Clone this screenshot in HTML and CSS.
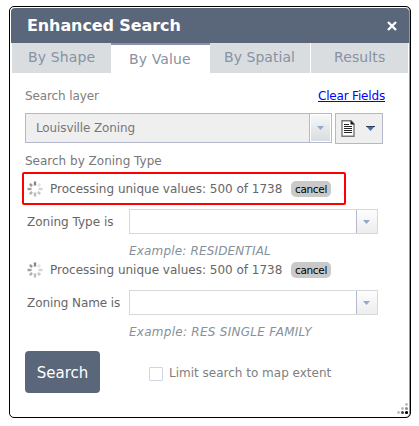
FILE: index.html
```html
<!DOCTYPE html>
<html lang="en">
<head>
<meta charset="utf-8">
<title>Enhanced Search</title>
<link rel="stylesheet" href="styles.css">
</head>
<body>
<svg width="0" height="0" class="defs">
  <symbol id="spinner" viewBox="0 0 16 16">
    <g stroke-width="2.4">
      <path d="M8 0.5v4" stroke="#858585"/>
      <path d="M13.2 2.8L10.9 5.1" stroke="#e3e3e3"/>
      <path d="M15.5 8h-4" stroke="#d3d3d3"/>
      <path d="M13.2 13.2l-2.3-2.3" stroke="#c6c6c6"/>
      <path d="M8 15.5v-4" stroke="#bbb"/>
      <path d="M2.8 13.2l2.3-2.3" stroke="#b0b0b0"/>
      <path d="M0.5 8h4" stroke="#a0a0a0"/>
      <path d="M2.8 2.8l2.3 2.3" stroke="#999"/>
    </g>
  </symbol>
  <symbol id="arrow" viewBox="0 0 7 4"><path d="M0 0h7L3.5 4z" fill="#8fa9cf"/></symbol>
</svg>
<main class="dialog">
  <header class="title"><h1>Enhanced Search</h1>
    <svg class="close" viewBox="0 0 10 10"><path d="M1 1l8 8M9 1L1 9" stroke="#fff" stroke-width="2.3"/></svg>
  </header>
  <nav class="tabs">
    <div class="tab shape"><span>By Shape</span></div>
    <div class="tab active"><span>By Value</span></div>
    <div class="tab spatial"><span>By Spatial</span></div>
    <div class="tab results"><span>Results</span></div>
  </nav>
  <div class="row layer"><span class="t-layer">Search layer</span><a href="#" class="t-clear">Clear Fields</a></div>
  <div class="row selects">
    <div class="select"><span class="t-lou">Louisville Zoning</span><i class="drop"><svg class="arrow"><use href="#arrow"/></svg></i></div>
    <div class="menu">
      <svg class="doc" viewBox="0 0 14 17"><path d="M1 .8h9l3 3v12.4H1z" fill="#fff" stroke="#777" stroke-width="1.4"/><path d="M9.5.5l4 4h-4z" fill="#111"/><path d="M3 4.5h5M3 6.5h8M3 8.5h8M3 10.5h8M3 12.5h8" stroke="#222" stroke-width="1.1"/></svg>
      <svg class="arrow2" viewBox="0 0 9 5"><path d="M0 0h9L4.5 5z" fill="#4b7096"/><path d="M0 .5h9" stroke="#27415c"/></svg>
    </div>
  </div>
  <div class="row by"><span class="t-by">Search by Zoning Type</span></div>
  <div class="status marked"><svg class="spin"><use href="#spinner"/></svg><span class="t-proc">Processing unique values: 500 of 1738</span><button class="cancel">cancel</button></div>
  <div class="field first"><label class="t-type">Zoning Type is</label><div class="combo"><i class="drop"><svg class="arrow"><use href="#arrow"/></svg></i></div></div>
  <div class="hint"><span class="t-ex1">Example: RESIDENTIAL</span></div>
  <div class="status"><svg class="spin"><use href="#spinner"/></svg><span class="t-proc">Processing unique values: 500 of 1738</span><button class="cancel">cancel</button></div>
  <div class="field second"><label class="t-name">Zoning Name is</label><div class="combo"><i class="drop"><svg class="arrow"><use href="#arrow"/></svg></i></div></div>
  <div class="hint"><span class="t-ex2">Example: RES SINGLE FAMILY</span></div>
  <footer class="foot"><button class="search">Search</button><i class="check"></i><span class="t-limit">Limit search to map extent</span></footer>
  <svg class="grip" viewBox="0 0 11 11"><g fill="#bbb"><circle cx="9.5" cy="1.5" r="1.4"/><circle cx="5.5" cy="5.5" r="1.4"/><circle cx="1.5" cy="9.5" r="1.4"/></g><circle cx="9.5" cy="5.5" r="1.5" fill="#888"/><circle cx="5.5" cy="9.5" r="1.5" fill="#444"/><circle cx="9.5" cy="9.5" r="1.6"/></svg>
</main>
</body>
</html>
```

FILE: styles.css
```css
* { box-sizing: border-box; }
body { margin: 0; background: #fff; font: 12px/16px "DejaVu Sans", sans-serif; color: #666; }
span, label, a, h1 { white-space: nowrap; }
.defs { position: absolute; }
.dialog { position: relative; width: 402px; height: 412px; margin: 6px 0 0 9px; border: 1px solid #000; border-radius: 5px; box-shadow: inset -1px 0 #999; padding: 1px 1px 0; }
.title { height: 35px; background: #5a6679; border-radius: 4px 4px 0 0; display: flex; align-items: center; justify-content: space-between; padding: 1px 12px 0 16px; }
h1 { margin: 0; font-size: 16px; line-height: 20px; color: #fff; letter-spacing: -.1px; }
.close { width: 10px; height: 10px; }
.tabs { display: grid; grid-template-columns: 99px 99px 100px 98px; height: 30px; padding-left: 1px; font-size: 14px; line-height: 18px; color: #8792a2; letter-spacing: .12px; }
.tab { background: #d9dde0; padding-top: 5px; padding-left: 16px; }
.tab.active { background: #fff; border-top: 2px solid #8a93a8; padding-left: 18px; }
.spatial { padding-left: 14px; letter-spacing: .05px; }
.results { margin-left: 1px; padding-left: 23px; }
.row { display: flex; margin-left: 14px; }
.layer { height: 40px; width: 360px; padding-top: 15px; justify-content: space-between; color: #808080; }
.t-layer { letter-spacing: -.1px; }
.t-clear { color: #00f; letter-spacing: -.18px; }
.t-lou { letter-spacing: -.12px; }
.selects { height: 31px; gap: 3px; }
.select { width: 307px; height: 30px; border: 1px solid #b3b9cb; background: #efefef; display: flex; align-items: center; justify-content: space-between; padding-left: 10px; color: #777; }
.drop { width: 21px; height: 100%; border-left: 1px solid #b3b9cb; background: linear-gradient(#fdfdfd, #ededed); display: flex; align-items: center; padding-left: 6px; }
.select .drop { background: linear-gradient(#f5f7f9, #d9dde0); border: 1px solid #fff; box-shadow: -1px 0 #b3b9cb; }
.arrow { width: 7px; height: 4px; }
.menu { width: 48px; height: 31px; border: 1px solid #b3b9cb; background: #efefef; display: flex; align-items: center; padding-left: 5px; gap: 11px; }
.doc { width: 14px; height: 17px; }
.arrow2 { width: 9px; height: 5px; }
.by { height: 28px; padding-top: 9px; color: #777; }
.status { width: 324px; height: 33px; margin-left: 11px; padding-left: 5px; display: flex; align-items: center; }
.marked { border: 2px solid #f00; border-radius: 2px; padding-left: 3px; }
.spin { width: 16px; height: 16px; margin-right: 7px; }
.t-proc { width: 241px; }
.cancel { width: 40px; height: 16px; margin: 0; padding: 1px 0 0; border: 0; border-radius: 5px; background: #c9c9c9; color: #000; font: 10.5px/15px "DejaVu Sans", sans-serif; letter-spacing: -.35px; }
.field { display: flex; align-items: center; height: 25px; margin-left: 16px; }
.field label { width: 102px; }
.t-name { letter-spacing: -.08px; }
.first, .second { margin-top: 4px; }
.combo { width: 249px; height: 25px; border: 1px solid #d5d8dd; display: flex; justify-content: flex-end; }
.hint { height: 19px; padding: 9px 0 0 118px; font-style: italic; color: #85919b; }
.t-ex1 { letter-spacing: .17px; }
.t-ex2 { letter-spacing: .27px; }
.second + .hint { height: 36px; }
.foot { display: flex; align-items: center; margin-left: 14px; height: 42px; }
.search { width: 75px; height: 42px; padding: 1px 0 0; border: 0; border-radius: 4px; background: #5a6679; color: #fff; font: 15px "DejaVu Sans", sans-serif; }
.check { width: 14px; height: 14px; border: 1px solid #cfd6df; border-radius: 1px; margin: 3px 6px 0 49px; }
.t-limit { color: #808080; padding-top: 1px; }
.grip { position: absolute; right: 2px; bottom: 3px; width: 11px; height: 11px; }
```
